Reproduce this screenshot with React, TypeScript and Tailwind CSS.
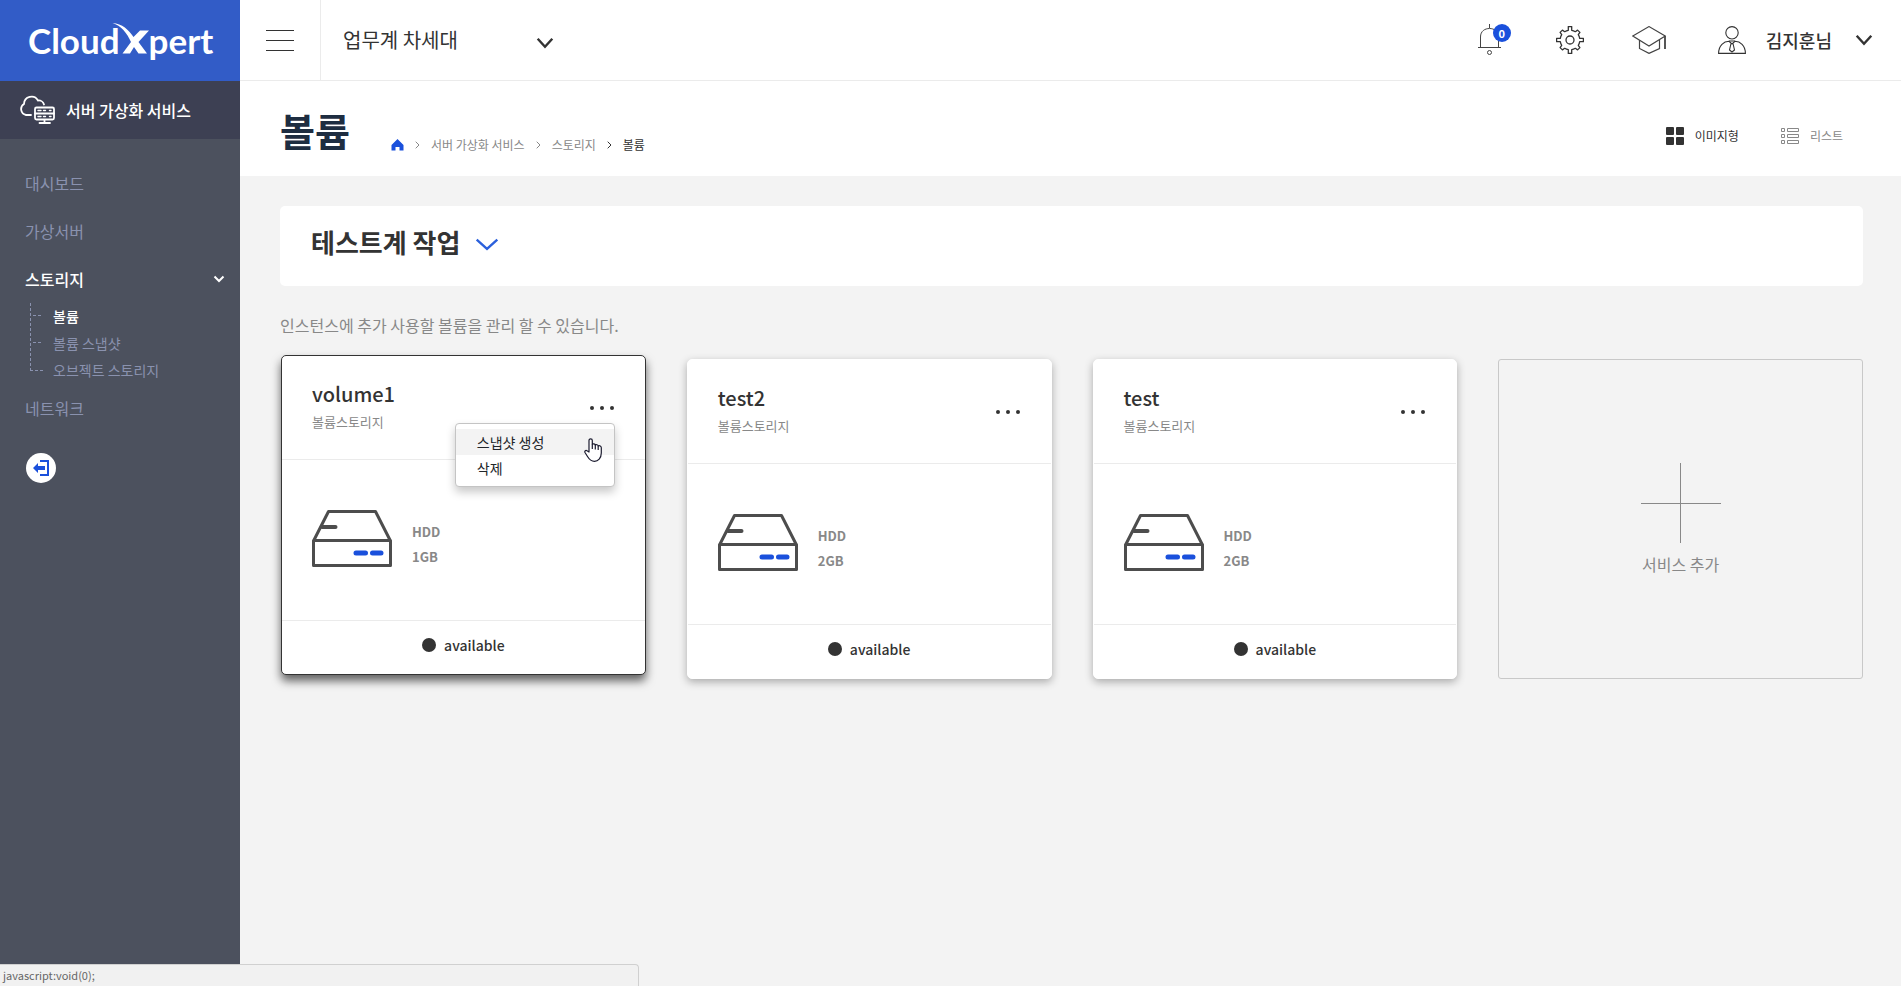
function Chevron({ w, h, sw, className }: { w: number; h: number; sw: number; className?: string }) {
  const p = sw / 2 + 0.5;
  return (
    <svg width={w} height={h} viewBox={`0 0 ${w} ${h}`} fill="none" stroke="currentColor" strokeWidth={sw} className={className} aria-hidden="true">
      <path d={`M${p} ${p}L${w / 2} ${h - p - 0.5}L${w - p} ${p}`} />
    </svg>
  );
}

function Logo() {
  return (
    <a href="#home" aria-label="CloudXpert" className="flex h-[81px] items-center bg-[#325cc7] pb-0.5 pl-7 font-['Lato',sans-serif] text-[35px] leading-10 font-bold text-white">
      <span>Cloud</span>
      <svg width="38" height="34" viewBox="0 0 38 34" fill="currentColor" aria-hidden="true" className="mb-0.5 -ml-2">
        <path d="M.5 1C10 1.500 17 8 21.500 15L28 8.500H37L26.500 20L35 31.500H26.500L22 25L18 31.500H10.500L19 20C15 11 9 3.500.5 1Z" />
      </svg>
      <span className="-ml-px">pert</span>
    </a>
  );
}

function CloudServerIcon() {
  return (
    <svg width="36" height="30" viewBox="0 0 36 30" fill="none" stroke="currentColor" strokeWidth="1.800" strokeLinecap="round" aria-hidden="true">
      <path d="M12 20H7A6 6 0 0 1 5 9A7.500 7.500 0 0 1 19 5.500A5.500 5.500 0 0 1 25 9.500" />
      <rect x="16" y="12.500" width="19" height="12" rx="1.500" />
      <path d="M16 18.500H35M25.500 25V28M20.500 28H31" />
      <path d="M19 15.500H22M24.500 15.500H26.500M30.500 15.500H32M19 21.500H22M24.500 21.500H26.500M30.500 21.500H32" strokeWidth="1.400" />
    </svg>
  );
}

function Sidebar() {
  return (
    <aside className="flex w-60 shrink-0 flex-col bg-[#4c515e]">
      <Logo />
      <div className="flex h-[58px] items-center gap-[11px] bg-[#3d4053] pl-[19px] text-base font-medium text-white">
        <CloudServerIcon />
        서버 가상화 서비스
      </div>
      <nav className="px-[25px] pt-5 text-base text-[#8a92af]">
        <a href="#dashboard" className="flex h-12 items-center">대시보드</a>
        <a href="#servers" className="flex h-12 items-center">가상서버</a>
        <a href="#storage" className="-mr-3 flex h-12 items-center justify-between pr-0.5 font-medium text-white">
          스토리지
          <Chevron w={12} h={8} sw={2} />
        </a>
        <div className="flex gap-[9px] pl-[5px] text-sm">
          <svg width="14" height="68" viewBox="0 0 14 68" fill="none" stroke="currentColor" strokeDasharray="3 2" aria-hidden="true">
            <path d="M.5 0V67M3 12.500H13M3 39.500H13M0 67.500H13" />
          </svg>
          <div className="flex flex-col">
            <a href="#volume" className="leading-[27px] font-medium text-white">볼륨</a>
            <a href="#snapshot" className="leading-[27px]">볼륨 스냅샷</a>
            <a href="#object" className="leading-[27px]">오브젝트 스토리지</a>
          </div>
        </div>
        <a href="#network" className="flex h-12 items-center">네트워크</a>
        <button type="button" aria-label="나가기" className="mt-[21px] ml-px flex size-[30px] items-center justify-center rounded-full bg-white text-[#1a50dc]">
          <svg width="16" height="16" viewBox="0 0 16 16" aria-hidden="true">
            <path d="M7 1H15V15H7" fill="none" stroke="currentColor" strokeWidth="2" />
            <path d="M0 8L5 3V6H12V10H5V13Z" fill="currentColor" />
          </svg>
        </button>
      </nav>
    </aside>
  );
}

function BellIcon() {
  return (
    <svg width="24" height="32" viewBox="0 0 24 32" fill="none" stroke="#444" aria-hidden="true">
      <path d="M11.500 0V4M0 23.500H23M2.500 23V13C2.500 7 7 4.500 11.500 4.500S20.500 7 20.500 13V23" />
      <circle cx="11.500" cy="28.500" r="2" />
    </svg>
  );
}

function GearIcon() {
  const outline = "M12.300 4.300V.6H15.700V4.300C17 4.500 18.200 5 19.300 5.700L21.600 4.100L23.900 6.400L22.300 8.700C23 9.800 23.500 11 23.700 12.300H27.400V15.700H23.700C23.500 17 23 18.200 22.300 19.300L23.900 21.600L21.600 23.900L19.300 22.300C18.200 23 17 23.500 15.700 23.700V27.400H12.300V23.700C11 23.500 9.800 23 8.700 22.300L6.400 23.900L4.100 21.600L5.700 19.300C5 18.200 4.500 17 4.300 15.700H.6V12.300H4.300C4.500 11 5 9.800 5.700 8.700L4.100 6.400L6.400 4.100L8.700 5.700C9.800 5 11 4.500 12.300 4.300Z";
  return (
    <svg width="28" height="28" viewBox="0 0 28 28" fill="none" stroke="#333" strokeWidth="1.300" strokeLinejoin="round" aria-hidden="true">
      <path d={outline} />
      <circle cx="14" cy="14" r="4" />
    </svg>
  );
}

function CapIcon() {
  return (
    <svg width="34" height="28" viewBox="0 0 34 28" fill="none" stroke="#444" aria-hidden="true">
      <path d="M.8 10L17 .6L33.200 10L17 20Z" strokeWidth="1.200" />
      <path d="M7.500 14V22.500L17 27.400L27.500 22.500V14" strokeWidth="1.200" />
      <path d="M33 10V23" strokeWidth="1.800" />
    </svg>
  );
}

function UserIcon() {
  return (
    <svg width="28" height="28" viewBox="0 0 28 28" fill="none" stroke="#333" strokeWidth="1.100" aria-hidden="true">
      <circle cx="14" cy="6.800" r="6.200" />
      <path d="M.6 27.400C.6 19 6 15.500 11 15.300L14 18L17 15.300C22 15.500 27.400 19 27.400 27.400Z" />
      <path d="M11 15H17M13 17.500L11.500 24L14 26L16.500 24L15 17.500" />
    </svg>
  );
}

function Header() {
  return (
    <header className="flex h-[81px] items-center border-b border-[#ebebeb] bg-white text-[#333]">
      <button type="button" aria-label="메뉴" className="flex h-20 w-[81px] flex-col items-center justify-center gap-[9px] border-r border-[#ebebeb]">
        <span className="h-px w-7 bg-[#333]" />
        <span className="h-px w-7 bg-[#333]" />
        <span className="h-px w-7 bg-[#333]" />
      </button>
      <button type="button" className="flex w-[233px] items-center justify-between pl-[22px] text-xl">
        업무계 차세대
        <Chevron w={18} h={12} sw={2.4} className="mt-[5px]" />
      </button>
      <div className="ml-auto flex items-center pr-7">
        <button type="button" aria-label="알림" className="relative mr-[54px]">
          <BellIcon />
          <span className="absolute top-0 left-[15px] flex size-[18px] items-center justify-center rounded-full bg-[#1a50dc] text-[11px] font-bold text-white">0</span>
        </button>
        <button type="button" aria-label="설정" className="mr-12"><GearIcon /></button>
        <button type="button" aria-label="교육" className="mr-[52px]"><CapIcon /></button>
        <button type="button" className="flex items-center text-lg font-medium">
          <UserIcon />
          <span className="mr-[23px] ml-5">김지훈님</span>
          <Chevron w={18} h={12} sw={2.4} />
        </button>
      </div>
    </header>
  );
}

function Separator() {
  return (
    <svg width="5" height="8" viewBox="0 0 5 8" fill="none" stroke="currentColor" aria-hidden="true">
      <path d="M.7.7L4 4L.7 7.300" />
    </svg>
  );
}

function TitleBar() {
  return (
    <div className="flex h-[95px] items-center bg-white pr-[58px] pl-10">
      <h1 className="mt-0.5 text-[38px] leading-[54px] font-bold text-[#1e2d41]">볼륨</h1>
      <nav aria-label="위치" className="mt-8 ml-[41px] flex items-center gap-[11px] text-xs text-[#888]">
        <a href="#home" aria-label="홈">
          <svg width="13" height="12" viewBox="0 0 13 12" fill="#1a50dc" aria-hidden="true">
            <path d="M6.500 0L12.500 6V11.500H8.500V8H4.500V11.500H.5V6Z" />
          </svg>
        </a>
        <Separator />
        <a href="#service">서버 가상화 서비스</a>
        <Separator />
        <a href="#storage">스토리지</a>
        <span className="flex items-center gap-[11px] text-[#333]">
          <Separator />
          <span>볼륨</span>
        </span>
      </nav>
      <div className="mt-[14px] ml-auto flex items-center gap-[42px] text-xs">
        <button type="button" className="flex items-center gap-[11px] text-[#333]">
          <svg width="18" height="18" viewBox="0 0 18 18" fill="currentColor" aria-hidden="true">
            <rect width="8" height="8" rx="1" /><rect x="10" width="8" height="8" rx="1" />
            <rect y="10" width="8" height="8" rx="1" /><rect x="10" y="10" width="8" height="8" rx="1" />
          </svg>
          이미지형
        </button>
        <button type="button" className="flex items-center gap-[11px] text-[#888]">
          <svg width="18" height="16" viewBox="0 0 18 16" fill="none" stroke="currentColor" aria-hidden="true">
            <path d="M.5.5H3.500V3.500H.5ZM.5 6.500H3.500V9.500H.5ZM.5 12.500H3.500V15.500H.5ZM6.500.5H17.500V3.500H6.500ZM6.500 6.500H17.500V9.500H6.500ZM6.500 12.500H17.500V15.500H6.500Z" />
          </svg>
          리스트
        </button>
      </div>
    </div>
  );
}

function DriveIcon() {
  return (
    <svg width="80" height="57" viewBox="0 0 80 57" fill="none" stroke="#4d4d4d" strokeWidth="3" strokeLinejoin="round" aria-hidden="true">
      <path d="M1.500 31L16.500 1.500H63.500L78.500 31M1.500 30.500H78.500V55.500H1.500Z" />
      <path d="M10 17H23.500" strokeWidth="4" strokeLinecap="round" />
      <path d="M44 43H53.500M60.500 43H69" stroke="#1a50dc" strokeWidth="5" strokeLinecap="round" />
    </svg>
  );
}

function HandCursor() {
  return (
    <svg width="18" height="24" viewBox="0 0 18 24" fill="#fff" stroke="#1a1a2e" strokeWidth="1.200" strokeLinejoin="round" className="pointer-events-none absolute top-[14px] right-[12px]" aria-hidden="true">
      <path d="M5 14V2.500C5 .2 8.300.2 8.300 2.500V6.500C9 5.600 11 5.800 11.300 7C12.300 6.300 14 6.800 14.200 8C15.500 7.300 17.300 8 17.300 9.800V15C17.300 20 14 23.300 10.500 23.300C6.500 23.300 5 21 3.500 18.500L1 14.500C.3 13 1.800 11.800 3 12.800Z" />
      <path d="M8.300 6.500V11M11.300 7V11.500M14.200 8V12" />
    </svg>
  );
}

function ActionMenu() {
  return (
    <div role="menu" className="absolute top-[67px] right-[30px] z-10 w-40 rounded-[4px] border border-[#c4c4c4] bg-white py-[5px] text-sm text-[#212529] shadow-[0_5px_10px_rgba(0,0,0,0.22)]">
      <button type="button" role="menuitem" className="block h-[26px] w-full bg-[#f3f3f3] pl-[21px] text-left">스냅샷 생성</button>
      <button type="button" role="menuitem" className="block h-[26px] w-full pl-[21px] text-left">삭제</button>
      <HandCursor />
    </div>
  );
}

type Volume = { name: string; size: string; active?: boolean };

const volumes: Volume[] = [
  { name: "volume1", size: "1GB", active: true },
  { name: "test2", size: "2GB" },
  { name: "test", size: "2GB" },
];

function VolumeCard({ name, size, active }: Volume) {
  const state = active
    ? "-translate-y-1 border-[#333] shadow-[0_6px_10px_rgba(0,0,0,0.6)]"
    : "border-white shadow-[0_3px_8px_rgba(0,0,0,0.3)]";
  return (
    <article className={`relative flex h-80 flex-col rounded-[5px] border bg-white text-[#333] ${state}`}>
      <div className="flex h-[104px] items-center justify-between border-b border-[#ebebeb] px-[30px]">
        <div>
          <h3 className="text-xl leading-7 font-medium">{name}</h3>
          <p className="text-[13px] leading-7 text-[#888]">볼륨스토리지</p>
        </div>
        <button type="button" aria-label={`${name} 메뉴`}>
          <svg width="25" height="4" viewBox="0 0 25 4" fill="currentColor" aria-hidden="true">
            <circle cx="2" cy="2" r="2" /><circle cx="12" cy="2" r="2" /><circle cx="22" cy="2" r="2" />
          </svg>
        </button>
      </div>
      <div className="flex flex-1 items-center gap-5 px-[30px] pb-1">
        <DriveIcon />
        <div className="mt-3 text-[13px] leading-[25px] font-bold text-[#888]">
          <p>HDD</p>
          <p>{size}</p>
        </div>
      </div>
      <div className="flex h-[54px] items-center justify-center gap-2 border-t border-[#ebebeb] pb-1.5 text-sm font-medium">
        <span className="size-[14px] rounded-full bg-[#333]" />
        available
      </div>
      {active && <ActionMenu />}
    </article>
  );
}

export default function App() {
  return (
    <div className="flex min-h-screen bg-[#f3f3f3] font-['Noto_Sans_CJK_KR',sans-serif]">
      <Sidebar />
      <div className="flex min-w-0 flex-1 flex-col">
        <Header />
        <TitleBar />
        <main className="pt-[30px] pr-[38px] pl-10">
          <section className="flex h-20 items-center rounded-[5px] bg-white px-[31px] pb-2">
            <h2>
              <button type="button" className="flex items-center gap-[15px] text-[26px] leading-10 font-bold text-[#333]">
                테스트계 작업
                <Chevron w={24} h={13} sw={2.4} className="mt-1 text-[#2b60dc]" />
              </button>
            </h2>
          </section>
          <p className="mt-[27px] text-base leading-6 text-[#888]">인스턴스에 추가 사용할 볼륨을 관리 할 수 있습니다.</p>
          <div className="mt-[22px] grid grid-cols-4 gap-[41px] pl-px">
            {volumes.map((v) => (
              <VolumeCard key={v.name} {...v} />
            ))}
            <button type="button" className="flex h-80 flex-col items-center justify-center gap-[9px] rounded-[3px] border border-[#c8c8c8] text-base text-[#888]">
              <svg width="80" height="80" viewBox="0 0 80 80" stroke="currentColor" aria-hidden="true">
                <path d="M0 40.500H80M39.500 0V80" />
              </svg>
              서비스 추가
            </button>
          </div>
        </main>
      </div>
      <div className="fixed bottom-0 left-0 h-[22px] w-[639px] rounded-tr-[4px] border-t border-r border-[#d0d0d0] bg-[#f1f1f1] pl-[3px] text-[11px] leading-5 text-[#666]">
        javascript:void(0);
      </div>
    </div>
  );
}
